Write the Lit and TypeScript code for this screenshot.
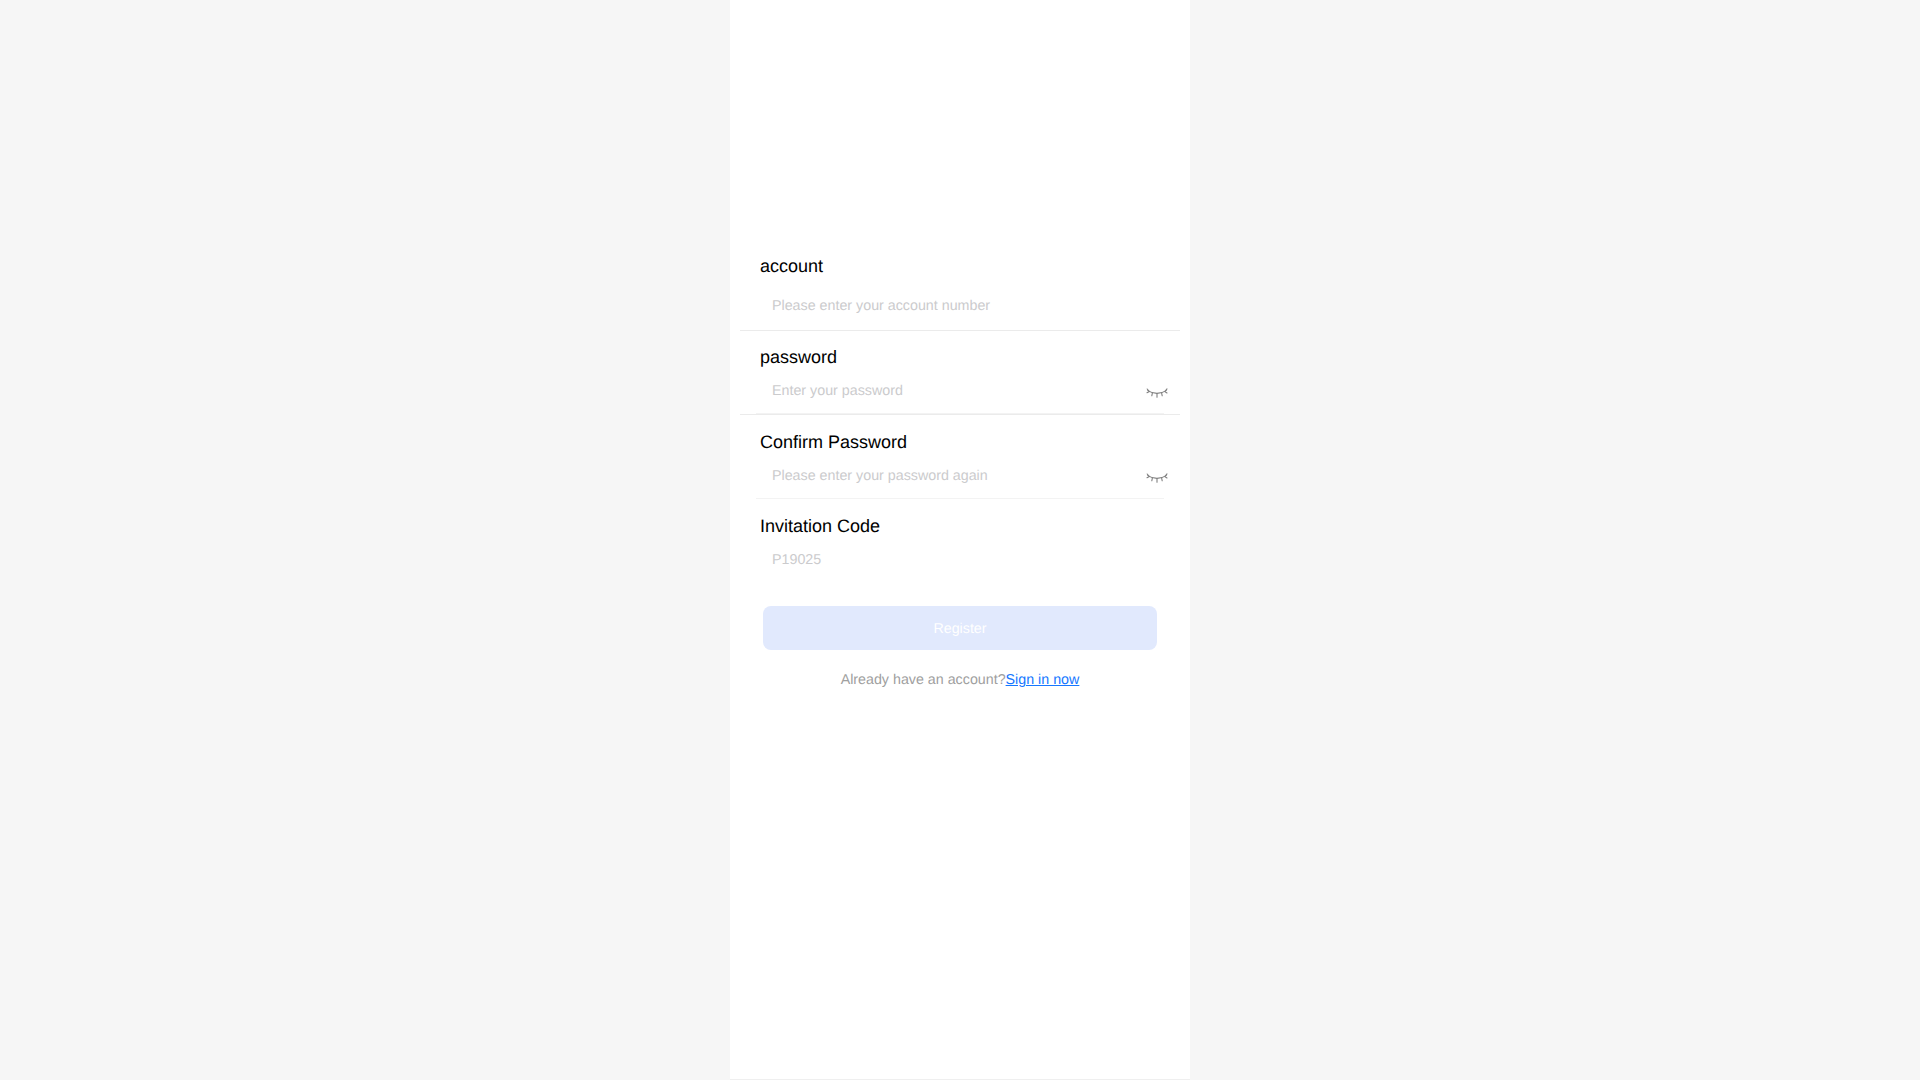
import { LitElement, html, css, svg } from "lit";
import { customElement } from "lit/decorators.js";

const eye = svg`<svg class="eye" width="22" height="10" viewBox="0 0 22 10" fill="none" stroke="#808080" stroke-width="1.1" stroke-linecap="round">
  <path d="M1.8 2.6Q11 8.2 20.2 2.6"/>
  <path d="M3.4 3.6L1.2 1M3.4 3.6L1 4.8M18.8 3.6L21 0.9M18.8 3.6L21 5M6.4 4.9L5.8 7.8M11 5.6V9.2M15.6 4.9L16.2 7.8"/>
</svg>`;

@customElement("app-root")
export class AppRoot extends LitElement {
  static styles = css`
    :host { display: block; min-height: 1080px; background: #f6f6f6; font-family: "Liberation Sans", Arial, sans-serif; text-rendering: geometricPrecision; }
    .page { width: 460px; height: 1079px; margin: 0 auto; background: #fff; box-shadow: 0 1px 0 #efefef; padding: 239px 10px 0; box-sizing: border-box; }
    .row { padding-top: 16px; }
    .row.first { margin-bottom: -1px; }
    .row.ruled { border-bottom: 1px solid #ebebeb; }
    .label { font-size: 18px; line-height: 22px; color: #000; padding-left: 20px; }
    .body { margin: 10px 16px 0; }
    .first .body { margin-top: 16px; padding-bottom: 13px; }
    .body.inner { padding-bottom: 11px; border-bottom: 1px solid #f3f3f3; }
    .field { display: flex; justify-content: space-between; align-items: flex-start; height: 24px; padding-left: 16px; }
    .ph { font-size: 14.28px; line-height: 26px; color: #cbcbcd; }
    .eye { margin: 10px -4px 0 0; }
    .btn { width: 394px; height: 44px; margin: 35px auto 0; background: #e1e9fd; color: #fff; border-radius: 8px; font-size: 14.28px; text-align: center; line-height: 46px; }
    .foot { margin-top: 20px; text-align: center; font-size: 14.28px; line-height: 20px; color: #a0a0a0; }
    .foot a { color: #1677ff; text-decoration: underline; }
  `;

  private row(label: string, ph: string, opts: { first?: boolean; ruled?: boolean; eye?: boolean } = {}) {
    return html`<div class="row ${opts.first ? "first" : ""} ${opts.ruled ? "ruled" : ""}">
      <div class="label">${label}</div>
      <div class="body ${opts.eye ? "inner" : ""}">
        <div class="field"><span class="ph">${ph}</span>${opts.eye ? eye : ""}</div>
      </div>
    </div>`;
  }

  render() {
    return html`<div class="page">
      ${this.row("account", "Please enter your account number", { first: true, ruled: true })}
      ${this.row("password", "Enter your password", { ruled: true, eye: true })}
      ${this.row("Confirm Password", "Please enter your password again", { eye: true })}
      ${this.row("Invitation Code", "P19025")}
      <div class="btn">Register</div>
      <div class="foot">Already have an account?<a href="#">Sign in now</a></div>
    </div>`;
  }
}
